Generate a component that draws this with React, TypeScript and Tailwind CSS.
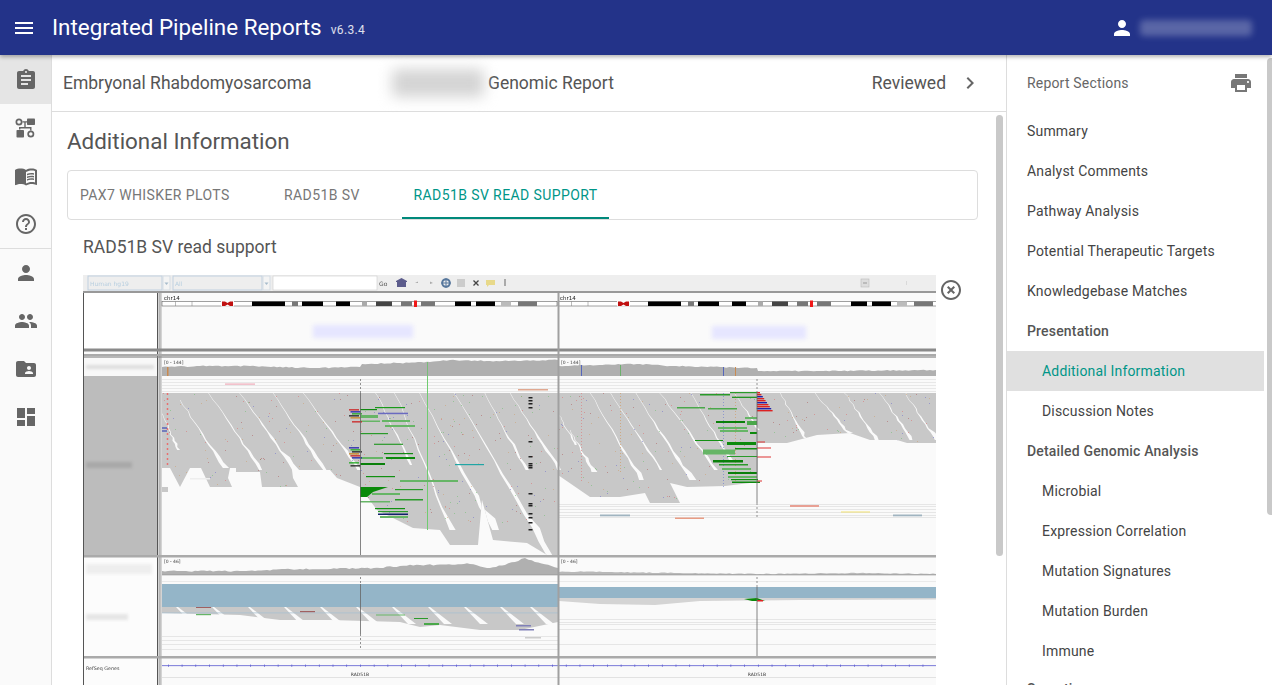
import {
  MdAssignment,
  MdChevronRight,
  MdDashboard,
  MdFolderShared,
  MdHelpOutline,
  MdHighlightOff,
  MdMenu,
  MdMenuBook,
  MdPeople,
  MdPerson,
  MdPrint,
} from "react-icons/md";

const SECTIONS = [
  { label: "Summary", level: 0 },
  { label: "Analyst Comments", level: 0 },
  { label: "Pathway Analysis", level: 0 },
  { label: "Potential Therapeutic Targets", level: 0 },
  { label: "Knowledgebase Matches", level: 0 },
  { label: "Presentation", level: 1 },
  { label: "Additional Information", level: 2, active: true },
  { label: "Discussion Notes", level: 2 },
  { label: "Detailed Genomic Analysis", level: 1 },
  { label: "Microbial", level: 2 },
  { label: "Expression Correlation", level: 2 },
  { label: "Mutation Signatures", level: 2 },
  { label: "Mutation Burden", level: 2 },
  { label: "Immune", level: 2 },
  { label: "Somatic", level: 3 },
];

function PipelineIcon() {
  return (
    <svg viewBox="0 0 24 24" width="24" height="24" fill="currentColor">
      <path d="M5 2.500a3.500 3.500 0 1 1 0 7 3.500 3.500 0 0 1 0-7zm0 1.700a1.800 1.800 0 1 0 0 3.600 1.800 1.800 0 0 0 0-3.600z" />
      <rect x="13" y="2.500" width="8" height="6.500" rx="0.800" />
      <path d="M8.500 5.200H13v1.400h-1.300v4.500h5.800v3.400h-1.400v-2H6.400v1h-1.400v-2.400h5.300V6.600H8.500z" />
      <rect x="2.500" y="14" width="7.500" height="7.500" rx="0.800" />
      <path d="M16.800 14.500a3.500 3.500 0 1 1 0 7 3.500 3.500 0 0 1 0-7zm0 1.700a1.800 1.800 0 1 0 0 3.600 1.800 1.800 0 0 0 0-3.600z" />
    </svg>
  );
}

function mulberry(seed: number) {
  return () => {
    seed |= 0;
    seed = (seed + 0x6d2b79f5) | 0;
    let t = Math.imul(seed ^ (seed >>> 15), 1 | seed);
    t = (t + Math.imul(t ^ (t >>> 7), 61 | t)) ^ t;
    return ((t ^ (t >>> 14)) >>> 0) / 4294967296;
  };
}

const pts = (list: number[][]) => list.map((p) => p.join(",")).join(" ");

// ideogram bands for the first frame, the second one is the same shifted by 396px
const BANDS: [number, number, string][] = [
  [252, 285, "#000"], [292, 298, "#777"], [302, 323, "#000"], [336, 350, "#000"],
  [362, 367, "#aaa"], [376, 392, "#444"], [401, 412, "#777"], [421, 435, "#777"],
  [455, 471, "#000"], [476, 495, "#000"], [501, 511, "#bbb"], [518, 537, "#777"],
];

const READS_LEFT = [
  [162, 393], [360, 393], [360, 487], [337, 478], [330, 470], [292, 470], [293, 478], [298, 487],
  [262, 487], [260, 472], [236, 472], [236, 468], [230, 468], [228, 478], [232, 487], [210, 487],
  [201, 468], [190, 468], [180, 487], [170, 468], [162, 468],
];
const READS_LEFT_B = [
  [360, 393], [558, 393], [558, 555], [547, 555], [527, 543], [493, 540], [482, 500], [478, 545],
  [450, 545], [440, 530], [413, 528], [397, 520], [377, 510], [360, 487],
];
const READS_RIGHT = [
  [559, 393], [936, 393], [936, 443], [907, 443], [897, 440], [870, 440], [850, 433], [817, 435],
  [787, 443], [758, 443], [758, 482], [725, 486], [687, 487], [670, 483], [680, 503], [650, 503],
  [645, 493], [620, 497], [590, 497], [558, 475],
];

// x0, y0, x1, y1, widest point of a white slash between read stacks
const SLASHES: number[][] = [
  [162, 413, 177, 450, 3], [180, 400, 223, 468, 5], [209, 393, 260, 470, 6], [240, 393, 293, 470, 7],
  [273, 393, 323, 470, 6], [303, 393, 358, 470, 6],
  [376, 393, 410, 465, 3], [395, 393, 450, 530, 5], [420, 393, 492, 530, 9], [455, 393, 547, 555, 12],
  [485, 393, 525, 470, 4], [510, 393, 558, 470, 5],
  [559, 415, 575, 445, 2], [570, 430, 592, 472, 5], [590, 393, 640, 480, 5], [610, 393, 660, 470, 3],
  [635, 393, 690, 480, 7], [660, 393, 715, 470, 4], [690, 393, 730, 460, 3], [735, 393, 757, 430, 3],
  [780, 393, 805, 440, 5], [815, 393, 847, 433, 5], [845, 393, 875, 440, 5], [880, 393, 910, 440, 5],
  [905, 393, 935, 440, 5],
];

const GREEN: [number, number, number, number, string][] = [
  [375, 405, 407, 1.2, "#1a9a1a"], [360, 377, 409, 1.2, "#128a12"], [360, 378, 415, 3, "#66b566"],
  [378, 408, 412.7, 1.5, "#6a6ac0"], [382, 410, 420, 2, "#66b566"], [360, 380, 420.5, 1.5, "#66b566"],
  [385, 415, 425, 2, "#66b566"], [360, 388, 433, 1.2, "#2a9a2a"], [374, 403, 443.7, 1.2, "#2a9a2a"],
  [384, 413, 453, 1.2, "#128a12"], [360, 383, 457, 2, "#66b566"], [386, 415, 457, 2, "#0c8a0c"],
  [360, 385, 463, 2, "#0a800a"], [366, 395, 476, 1.2, "#129012"], [400, 458, 480, 2, "#66b566"],
  [395, 423, 489, 1.2, "#2a9a2a"], [372, 400, 493, 2, "#66b566"], [395, 423, 499, 1.5, "#2a9a2a"],
  [360, 390, 501, 1.5, "#66b566"], [375, 405, 508, 1.2, "#129012"], [378, 408, 511, 1.2, "#2a9a2a"],
  [378, 408, 513.5, 1.5, "#10206a"], [380, 408, 516, 2, "#66b566"], [455, 484, 464, 1.2, "#20a5a5"],
  [700, 730, 394, 1.5, "#2a9a2a"], [730, 757, 392, 1.2, "#2a9a2a"], [732, 757, 396.7, 1.2, "#129012"],
  [677, 705, 407, 1.5, "#4aa84a"], [708, 737, 408, 1.5, "#4aa84a"], [745, 757, 417, 2, "#66b566"],
  [716, 745, 421, 2, "#0a800a"], [718, 747, 427, 2, "#66b566"], [720, 748, 430, 2, "#66b566"],
  [747, 757, 421, 4, "#4aa84a"], [750, 757, 432, 2, "#0c8a0c"], [695, 723, 440, 1, "#129012"],
  [727, 756, 442, 3, "#0c8a0c"], [735, 757, 448, 1.5, "#129012"], [703, 735, 449.5, 5, "#66b566"],
  [727, 757, 456, 1, "#2a9a2a"], [713, 743, 460, 2.5, "#0a800a"], [719, 748, 464, 1.5, "#2a9a2a"],
  [722, 751, 468, 2, "#66b566"], [728, 757, 472, 2, "#0a800a"], [728, 757, 476, 2, "#66b566"],
  [731, 758, 479, 1.2, "#129012"], [732, 760, 481.5, 1.5, "#0c8a0c"],
];

const TRACK_LINES = [504, 506, 509, 512, 515, 517];

function IgvSnapshot() {
  const rnd = mulberry(51);

  const gaps = SLASHES.map(([x0, y0, x1, y1, max]) => {
    const left: number[][] = [];
    const right: number[][] = [];
    const steps = 12;
    for (let s = 0; s <= steps; s++) {
      const t = s / steps;
      const y = y0 + (y1 - y0) * t;
      const x = x0 + (x1 - x0) * t + (rnd() - 0.5) * 2;
      const w = 0.5 + max * t * t * (0.35 + rnd() * 0.8);
      left.push([x, y]);
      right.unshift([x + w, y]);
    }
    return pts([...left, ...right]);
  });

  // adds small noise between the points so a coverage track has a rough top
  const rough = (list: number[][], amp: number) => {
    const out: number[][] = [];
    list.forEach((p, i) => {
      out.push(p);
      const next = list[i + 1];
      if (!next || next[0] - p[0] < 3) return;
      const n = Math.floor((next[0] - p[0]) / 3);
      for (let k = 1; k < n; k++) {
        const t = k / n;
        out.push([p[0] + (next[0] - p[0]) * t, p[1] + (next[1] - p[1]) * t + (rnd() - 0.5) * amp]);
      }
    });
    return out;
  };

  const speckColors = ["#d66", "#66c", "#6b6", "#c96", "#a55"];
  const specks = Array.from({ length: 650 }, () => ({
    x: 162 + Math.floor(rnd() * 774),
    y: 393 + Math.floor(rnd() * 130),
    c: speckColors[Math.floor(rnd() * 5)],
  }));
  const ticks = Array.from({ length: 57 }, (_, i) => 168 + i * 13.72);
  const mismatch = ["#c22", "#22a", "#2a2", "#222", "#c82"];

  return (
    <svg viewBox="83 275 853 430" width="853" height="430" className="block shrink-0 blur-[0.35px]">
      <defs>
        <clipPath id="reads">
          <polygon points={pts(READS_LEFT)} />
          <polygon points={pts(READS_LEFT_B)} />
          <polygon points={pts(READS_RIGHT)} />
        </clipPath>
      </defs>
      <rect x="83" y="275" width="853" height="430" fill="#fafafa" />

      {/* toolbar */}
      <rect x="83" y="275" width="853" height="16" fill="#eeeeee" />
      <rect x="88" y="276" width="74" height="14" fill="#eeeeee" stroke="#c0d0e0" />
      <text x="90" y="285.500" fontSize="6" fill="#b8cfe0" fontFamily="DejaVu Sans">Human hg19</text>
      <rect x="163" y="276" width="7" height="14" fill="#f4f4f4" stroke="#d5dde5" />
      <path d="M164.500 282.500h4l-2 2.500z" fill="#a8bccc" />
      <rect x="173" y="276" width="89" height="14" fill="#eeeeee" stroke="#c0d0e0" />
      <text x="175" y="285.500" fontSize="6" fill="#b8cfe0" fontFamily="DejaVu Sans">All</text>
      <rect x="263" y="276" width="7" height="14" fill="#f4f4f4" stroke="#d5dde5" />
      <path d="M264.500 282.500h4l-2 2.500z" fill="#a8bccc" />
      <rect x="273" y="276" width="104" height="14" fill="#fff" stroke="#ccc" strokeWidth="0.600" />
      <text x="379" y="286" fontSize="6" fill="#555" fontFamily="DejaVu Sans">Go</text>
      <path d="M396 281l5.500-3 5.500 3v1h-1v5h-9v-5h-1z" fill="#5c5c8c" />
      <path d="M418 283l-3 0 3-1.500z M430 281.500l3 1.500-3 1z" fill="#aaa" />
      <circle cx="446" cy="283" r="3.800" fill="none" stroke="#57779c" strokeWidth="2" />
      <path d="M441 283h10M446 278v10" stroke="#57779c" />
      <rect x="457" y="279" width="8" height="8" fill="#ccc" />
      <path d="M473.500 280.500l5 5m0-5l-5 5" stroke="#444" strokeWidth="1.300" />
      <path d="M486 280h9v5h-6l-2 2v-2h-1z" fill="#e8d98a" />
      <rect x="504.500" y="279" width="1" height="7" fill="#666" />
      <rect x="861" y="279" width="8" height="8" fill="#ddd" stroke="#bbb" strokeWidth="0.600" />
      <path d="M863 283h4" stroke="#999" />
      <rect x="906" y="281" width="0.600" height="4" fill="#ccc" />
      <rect x="83" y="291" width="853" height="2" fill="#999" />

      {/* left name panel */}
      <rect x="84" y="293" width="73" height="57" fill="#fff" />
      <rect x="84" y="358" width="73" height="197" fill="#bcbcbc" />
      <rect x="84" y="358" width="73" height="18" fill="#f8f8f8" />
      <rect x="84" y="558" width="73" height="98" fill="#fcfcfc" />
      <rect x="84" y="659" width="73" height="46" fill="#fcfcfc" />
      <g className="blur-[1.500px]">
        <rect x="86" y="365" width="68" height="4" fill="#ddd" />
        <rect x="86" y="462" width="46" height="6" fill="#a8a8a8" />
        <rect x="86" y="564" width="66" height="10" fill="#eee" />
        <rect x="86" y="614" width="42" height="6" fill="#e5e5e5" />
      </g>
      <text x="86" y="670" fontSize="4.800" fill="#444" fontFamily="DejaVu Sans">RefSeq Genes</text>
      <path d="M83.500 293v412M157.500 293v412" stroke="#555" />
      <rect x="158" y="293" width="4" height="412" fill="#d4d4d4" />
      <rect x="159.500" y="293" width="0.800" height="412" fill="#999" />

      {/* ideogram */}
      {[0, 396].map((dx) => (
        <g key={dx}>
          <text x={164 + dx} y="299.500" fontSize="5.500" fill="#222" fontFamily="DejaVu Sans">chr14</text>
          <rect x={162 + dx} y="301.500" width="395" height="4.500" fill="#fff" stroke="#444" strokeWidth="0.500" />
          {BANDS.map(([a, b, c]) => (
            <rect key={a} x={a + dx} y="301.500" width={b - a} height="4.500" fill={c} />
          ))}
          <path d="M175.500 301.500v4.500M192 301.500v4.500" transform={`translate(${dx} 0)`} stroke="#777" strokeWidth="0.500" />
          <rect x={221 + dx} y="301" width="13" height="5.500" fill="#fafafa" />
          <path d={`M${222 + dx} 301.500h3l2.500 1.500 2.500-1.500h3v4.500h-3l-2.500-1.500-2.500 1.500h-3z`} fill="#c01010" />
          <rect x={414 + dx} y="300.500" width="3" height="6.500" fill="#f01818" />
        </g>
      ))}
      <g className="blur-[2px]">
        <rect x="313" y="325" width="100" height="13" fill="#e6e6ff" />
        <rect x="712" y="326" width="94" height="13" fill="#e6e6ff" />
      </g>

      {/* splitters */}
      <rect x="84" y="348.500" width="852" height="3" fill="#8a8a8a" />
      <rect x="84" y="354" width="852" height="2" fill="#aaa" />
      <rect x="84" y="356" width="852" height="2" fill="#888" opacity="0.600" />

      {/* coverage */}
      <text x="164" y="364" fontSize="4.500" fill="#444" fontFamily="DejaVu Sans">[0 - 144]</text>
      <text x="561" y="364" fontSize="4.500" fill="#444" fontFamily="DejaVu Sans">[0 - 144]</text>
      <polygon
        fill="#b0b0b0"
        points={pts([[162, 376], ...rough([[162, 367], [200, 366], [250, 366], [310, 368], [360, 367], [362, 364], [400, 363], [430, 362], [450, 360], [490, 361], [558, 360]], 1.2), [558, 376]])}
      />
      <polygon
        fill="#b0b0b0"
        points={pts([[559, 376], ...rough([[559, 366], [590, 365], [640, 364], [670, 366], [720, 367], [757, 368], [758, 371], [820, 371], [936, 370]], 1), [936, 376]])}
      />
      <rect x="167" y="367" width="1.500" height="9" fill="#c98a50" />
      <rect x="427" y="362" width="0.800" height="14" fill="#6cc06c" />
      <rect x="581" y="365" width="1" height="11" fill="#5566bb" />
      <rect x="620" y="365" width="1" height="11" fill="#6cb06c" />
      <rect x="723" y="367" width="1" height="9" fill="#5566bb" />
      <rect x="735" y="367" width="1" height="9" fill="#c98a50" />

      {/* soft clip rows above the reads */}
      {[379, 382, 385, 388, 391].map((y) => (
        <rect key={y} x="162" y={y} width="774" height="0.800" fill="#e4e4e4" />
      ))}
      <rect x="225" y="383.500" width="30" height="1.200" fill="#eeaab8" />
      <rect x="518" y="389" width="30" height="1.500" fill="#e0a890" />

      {/* alignments */}
      <polygon points={pts(READS_LEFT)} fill="#c8c8c8" />
      <polygon points={pts(READS_LEFT_B)} fill="#c8c8c8" />
      <polygon points={pts(READS_RIGHT)} fill="#c8c8c8" />
      <rect x="190" y="478" width="20" height="1.500" fill="#eeeeee" />
      <rect x="162" y="487" width="6" height="5" fill="#c8c8c8" />
      <g clipPath="url(#reads)">
        {gaps.map((g, i) => (
          <polygon key={i} points={g} fill="#fafafa" />
        ))}
        {specks.map((s, i) => (
          <rect key={i} x={s.x} y={s.y} width="1" height="1" fill={s.c} opacity="0.500" />
        ))}
      </g>
      <path d="M167.500 393v72" stroke="#e87070" strokeWidth="1.500" strokeDasharray="2 3" />
      <path d="M581.500 393v90" stroke="#e07070" strokeWidth="0.800" strokeDasharray="1 2" opacity="0.700" />
      <path d="M620.500 393v80" stroke="#d09050" strokeWidth="0.800" strokeDasharray="1 2" opacity="0.700" />
      <path d="M723.500 393v95" stroke="#6070d0" strokeWidth="0.800" strokeDasharray="1 2" opacity="0.700" />
      <path d="M735.500 393v90" stroke="#d09050" strokeWidth="0.800" strokeDasharray="1 2" opacity="0.700" />
      <path d="M427.500 376v154" stroke="#70cc70" strokeWidth="1" />
      <path d="M162 428h5M162 431h5" stroke="#2030b0" strokeWidth="1" />
      {[397, 400, 403, 407, 441, 456, 463, 465, 467, 493, 503, 505, 513, 517, 522, 529].map((y) => (
        <rect key={y} x="528.500" y={y} width="4" height="1.500" fill="#222" />
      ))}

      {GREEN.map(([a, b, y, h, c], i) => (
        <rect key={i} x={a} y={y} width={b - a} height={h} fill={c} />
      ))}
      <polygon points={pts([[360, 487], [388, 487], [373, 492], [367, 497], [360, 497]])} fill="#0a8a0a" />
      {[409, 411, 413, 415, 417, 421, 447, 449, 451, 453, 455, 457, 462, 465].map((y, i) => (
        <rect key={y} x={349 + (i % 3) * 1.500} y={y} width="10" height="1.600" fill={mismatch[i % 5]} opacity="0.800" />
      ))}
      {[392, 394, 396, 398, 400, 402, 404, 406, 408, 410].map((y, i) => (
        <rect key={y} x="757" y={y} width={3 + i * 1.400} height="1.400" fill={i % 3 === 2 ? "#2222aa" : "#d22"} />
      ))}
      <path d="M757 442h8M757 448h14M757 457h14M757 481h5" stroke="#d33" />

      {TRACK_LINES.map((y) => (
        <rect key={y} x="559" y={y} width="377" height="0.800" fill="#e2e2e2" />
      ))}
      <rect x="790" y="505" width="29" height="2" fill="#e8a094" />
      <rect x="841" y="511.500" width="29" height="1" fill="#f0e070" />
      <rect x="600" y="514.500" width="30" height="1.800" fill="#a0b4c0" />
      <rect x="893" y="514.500" width="29" height="1.800" fill="#a0b4c0" />
      <rect x="675" y="517.500" width="29" height="1.500" fill="#e89c84" />
      <rect x="84" y="555" width="852" height="2.500" fill="#aaa" />

      {/* rna panel */}
      <text x="164" y="562.500" fontSize="4.500" fill="#444" fontFamily="DejaVu Sans">[0 - 46]</text>
      <text x="561" y="562.500" fontSize="4.500" fill="#444" fontFamily="DejaVu Sans">[0 - 46]</text>
      <polygon
        fill="#b0b0b0"
        points={pts([[162, 575], ...rough([[162, 571], [240, 571], [300, 569], [380, 568], [400, 566], [420, 565], [440, 564.5], [470, 564], [487, 568], [505, 565], [525, 558], [535, 562], [558, 568]], 1.500), [558, 575]])}
      />
      <polygon
        fill="#b8b8b8"
        points={pts([[559, 575], ...rough([[559, 572], [590, 571.500], [640, 572.500], [680, 573], [760, 574], [860, 573], [936, 574]], 0.800), [936, 575]])}
      />
      <rect x="162" y="574.500" width="774" height="0.800" fill="#999" />
      <rect x="162" y="581" width="396" height="0.800" fill="#e6e6e6" />
      <rect x="559" y="581" width="377" height="0.800" fill="#e6e6e6" />
      <rect x="162" y="584" width="396" height="23" fill="#94b5c8" />
      <rect x="559" y="587" width="377" height="11" fill="#94b5c8" />
      <polygon
        fill="#c8c8c8"
        points={pts([[162, 607], [558, 607], [558, 622], [520, 630], [480, 630], [440, 625], [420, 627], [400, 622], [330, 620], [280, 620], [240, 615], [162, 613]])}
      />
      {[176, 212, 248, 284, 320, 356, 392, 428, 464, 500, 530].map((x) => (
        <polygon key={x} points={pts([[x, 607], [x + 2, 607], [x + 24, 624], [x + 16, 624]])} fill="#fafafa" />
      ))}
      <polygon
        fill="#d4d4d4"
        points={pts([[559, 598], [936, 598], [936, 599.500], [800, 600], [700, 601], [655, 605], [600, 604], [559, 601]])}
      />
      <rect x="162" y="612.500" width="396" height="0.800" fill="#a8c0d0" />
      <rect x="196" y="607" width="15" height="1" fill="#a06060" />
      <rect x="300" y="611" width="15" height="1.200" fill="#a06060" />
      <rect x="196" y="614" width="15" height="1.200" fill="#66b566" />
      <rect x="376" y="614.500" width="29" height="1" fill="#66b566" />
      <rect x="414" y="618" width="14" height="1" fill="#2a9a2a" />
      <rect x="424" y="623" width="15" height="2" fill="#4aa84a" />
      <rect x="516" y="625" width="15" height="1.500" fill="#8080b8" />
      <rect x="519" y="629" width="15" height="1.500" fill="#8080b8" />
      <rect x="525" y="637" width="16" height="1.500" fill="#ccc" />
      <polygon points="744,599 757,598 765,601 752,601" fill="#0a8a0a" />
      <rect x="757" y="600" width="6" height="1.500" fill="#d22" />
      {[636, 640, 644, 649].map((y) => (
        <rect key={y} x="162" y={y} width="396" height="0.800" fill="#e2e2e2" />
      ))}
      {[619, 622, 624, 629, 644].map((y) => (
        <rect key={y} x="559" y={y} width="377" height="0.800" fill="#e2e2e2" />
      ))}
      <rect x="84" y="656" width="852" height="2.500" fill="#aaa" />

      {/* refseq genes */}
      <rect x="162" y="665.300" width="774" height="0.800" fill="#5a5ad0" />
      {ticks.map((t) => (
        <rect key={t} x={t} y="664.500" width="0.700" height="2.400" fill="#5a5ad0" />
      ))}
      <rect x="162" y="677" width="774" height="0.800" fill="#ddd" />
      <text x="360" y="676" textAnchor="middle" fontSize="4.500" fill="#333" fontFamily="DejaVu Sans">RAD51B</text>
      <text x="757" y="676" textAnchor="middle" fontSize="4.500" fill="#333" fontFamily="DejaVu Sans">RAD51B</text>

      {/* locus lines */}
      <path d="M360.500 379v14M757 379v14M757 503v16M360.500 577v7M360.500 634v16M757 577v10" stroke="#777" strokeWidth="0.800" strokeDasharray="2 2" />
      <path d="M360.500 393v162M757 393v110M360.500 584v50M757 587v69" stroke="#666" strokeWidth="0.800" />
      <rect x="557.500" y="293" width="2" height="412" fill="#a0a0a0" />
    </svg>
  );
}

export default function App() {
  return (
    <div className="flex h-[685px] w-[1272px] flex-col overflow-hidden bg-white font-[Roboto,sans-serif]">
      <header className="relative z-10 flex h-[55px] shrink-0 items-center bg-[#233389] pl-3 pr-5 text-white shadow-[0_2px_4px_rgba(0,0,0,0.3)]">
        <MdMenu size={24} />
        <span className="ml-4 text-[22.400px] leading-none">Integrated Pipeline Reports</span>
        <span className="ml-[9px] mt-1 text-xs tracking-[0.35px] text-white/85">v6.3.4</span>
        <MdPerson size={24} className="ml-auto" />
        <div className="ml-[6px] h-4 w-[112px] rounded bg-white/25 blur-[3px]" />
      </header>

      <div className="flex min-h-0 flex-1">
        <nav className="flex w-[52px] shrink-0 flex-col border-r border-[#ddd] bg-[#fafafa] text-[#666]">
          <div className="flex h-[49px] items-center justify-center bg-[#e5e5e5]">
            <MdAssignment size={24} />
          </div>
          <div className="flex h-12 items-center justify-center">
            <PipelineIcon />
          </div>
          <div className="flex h-12 items-center justify-center">
            <MdMenuBook size={24} />
          </div>
          <div className="flex h-12 items-center justify-center">
            <MdHelpOutline size={24} />
          </div>
          <div className="h-px bg-[#ddd]" />
          <div className="flex h-12 items-center justify-center">
            <MdPerson size={24} />
          </div>
          <div className="flex h-12 items-center justify-center">
            <MdPeople size={24} />
          </div>
          <div className="flex h-12 items-center justify-center">
            <MdFolderShared size={24} />
          </div>
          <div className="flex h-12 items-center justify-center">
            <MdDashboard size={24} />
          </div>
        </nav>

        <main className="relative flex w-[954px] shrink-0 flex-col overflow-hidden">
          <div className="flex h-[57px] shrink-0 items-center border-b border-[#ddd] pl-[11px] pr-6 text-[17.500px] text-[#555]">
            <span className="w-[329px]">Embryonal Rhabdomyosarcoma</span>
            <div className="h-[28px] w-[92px] rounded bg-[#d4d4d4] blur-[7px]" />
            <span className="ml-1">Genomic Report</span>
            <span className="ml-auto">Reviewed</span>
            <MdChevronRight size={24} className="ml-3 text-[#666]" />
          </div>

          <div className="flex min-h-0 flex-1 flex-col pl-[15px]">
            <h1 className="mt-[14px] text-[22.400px] leading-[30px] text-[#555]">Additional Information</h1>
            <div className="mt-[14px] flex h-[50px] w-[911px] shrink-0 rounded border border-[#ddd] pl-3 text-sm uppercase tracking-[0.4px] text-[#777]">
              <span className="flex h-full w-[204px] items-center">PAX7 Whisker Plots</span>
              <span className="flex h-full w-[118px] items-center">RAD51B SV</span>
              <span className="flex h-full w-[207px] items-center justify-center border-b-2 border-[#00897b] pt-px text-[#009688]">
                RAD51B SV read support
              </span>
            </div>
            <h2 className="ml-4 mt-[15px] text-[17.500px] leading-6 text-[#555]">RAD51B SV read support</h2>
            <div className="ml-4 mt-[16px] flex items-start">
              <IgvSnapshot />
              <MdHighlightOff size={24} className="ml-[3px] mt-[3px] shrink-0 text-[#666]" />
            </div>
          </div>
          <div className="absolute right-[3px] top-[60px] h-[441px] w-[7px] rounded bg-[#c9c9c9]" />
        </main>

        <aside className="relative flex min-w-0 flex-1 flex-col overflow-hidden border-l border-[#ddd]">
          <div className="flex h-[56px] shrink-0 items-center pl-5 pr-[19px] text-sm tracking-[0.18px] text-[#666]">
            <span>Report Sections</span>
            <MdPrint size={24} className="ml-auto text-[#777]" />
          </div>
          <ul className="text-sm tracking-[0.18px] text-[#444]">
            {SECTIONS.map((s) => (
              <li
                key={s.label}
                className={`flex h-10 w-[257px] items-center ${s.level === 2 ? "pl-[35px]" : "pl-5"} ${
                  s.level === 1 ? "font-medium text-[#555]" : ""
                } ${s.level === 3 ? "-mt-0.5 font-medium text-[#555]" : ""} ${s.active ? "bg-[#e0e0e0] text-[#009688]" : ""}`}
              >
                {s.label}
              </li>
            ))}
          </ul>
          <div className="absolute right-0 top-[3px] h-[457px] w-[5px] rounded-l bg-[#c9c9c9]" />
        </aside>
      </div>
    </div>
  );
}
